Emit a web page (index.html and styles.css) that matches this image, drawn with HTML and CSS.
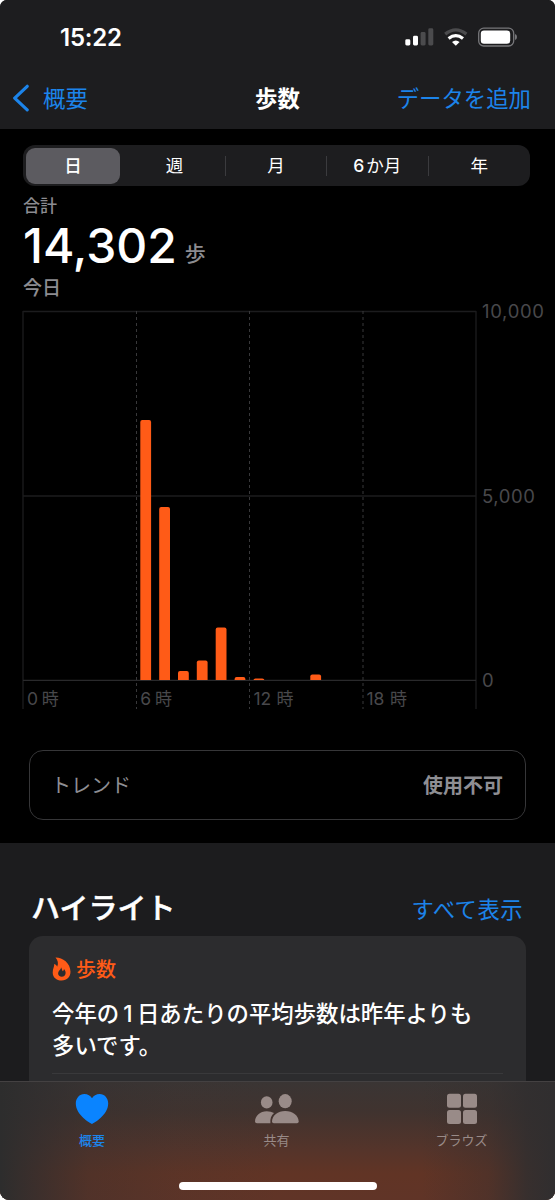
FILE: index.html
```html
<!DOCTYPE html>
<html lang="ja">
<head>
<meta charset="utf-8">
<title>歩数</title>
<link rel="stylesheet" href="styles.css">
</head>
<body>
<div class="phone">
  <header class="header">
    <div class="status">
      <span class="time">15:22</span>
      <svg class="status-icons" width="112" height="20" viewBox="0 0 112 20">
        <g fill="#fff"><rect x="0.3" y="12.3" width="5" height="6.1" rx="1.4"/><rect x="8" y="8.8" width="5" height="9.6" rx="1.4"/></g>
        <g fill="#4b4b4d"><rect x="15.6" y="5" width="5" height="13.4" rx="1.4"/><rect x="23.3" y="1.3" width="5" height="17.1" rx="1.4"/></g>
        <path d="M40.2 7.1Q50.8-1.3 61.4 7.1" fill="none" stroke="#4b4b4d" stroke-width="3.3"/>
        <path d="M43.6 11.6Q50.8 5.8 58 11.6" fill="none" stroke="#fff" stroke-width="3.2"/>
        <path d="M47 15Q50.8 11.9 54.6 15L50.8 18.8Z" fill="#fff"/>
        <rect x="73.7" y="1.2" width="35" height="17.8" rx="5" fill="none" stroke="#77777a" stroke-width="1.3"/>
        <rect x="75.8" y="3.5" width="29.4" height="13.2" rx="3.2" fill="#fff"/>
        <path d="M110 7.1Q112 7.8 112 10.1T110 13.1Z" fill="#77777a"/>
      </svg>
    </div>
    <nav class="nav">
      <a class="back"><svg width="18" height="28" viewBox="0 0 18 28"><path d="M15.2 2.3L2.7 14.1L15.2 25.8" fill="none" stroke="#1c84ea" stroke-width="3.2" stroke-linecap="round" stroke-linejoin="round"/></svg><span>概要</span></a>
      <h1 class="title">歩数</h1>
      <a class="add">データを追加</a>
    </nav>
  </header>

  <main class="content">
    <div class="segments">
      <span class="segment selected">日</span><span class="segment">週</span><span class="segment divided">月</span><span class="segment divided"><span class="six">6</span>か月</span><span class="segment divided">年</span>
    </div>
    <section class="summary">
      <div class="total-label">合計</div>
      <div class="total"><span class="number">14,302</span><span class="unit">歩</span></div>
      <div class="date">今日</div>
    </section>
    <svg class="chart" width="555" height="420" viewBox="0 300 555 420">
      <g stroke="#1c1c1e" stroke-width="1.3" fill="none">
        <path d="M23 311.5H476M23 496H476"/>
        <path d="M23 311V709M476 311V709"/>
        <path d="M23 680.3H476" stroke="#29292b"/>
        <path d="M136.5 311V709M249.5 311V709M363 311V709" stroke="#38383a" stroke-width="1" stroke-dasharray="3 3"/>
      </g>
      <g fill="#ff5b17">
        <path d="M140.3 680V422q0-2 2-2h6.8q2 0 2 2V680z"/>
        <path d="M159.2 680V509q0-2 2-2h6.8q2 0 2 2V680z"/>
        <path d="M178 680V673q0-2 2-2h6.8q2 0 2 2V680z"/>
        <path d="M196.8 680V662.6q0-2 2-2h6.8q2 0 2 2V680z"/>
        <path d="M215.7 680V629.5q0-2 2-2h6.8q2 0 2 2V680z"/>
        <path d="M234.6 680v-1q0-2 2-2h6.8q2 0 2 2v1z"/>
        <path d="M253.5 680q0-1.5 2-1.5h6.8q2 0 2 1.5z"/>
        <path d="M310.3 680v-3.5q0-2 2-2h6.8q2 0 2 2V680z"/>
      </g>
      <g class="axis-y">
        <text x="482" y="318" textLength="62">10,000</text>
        <text x="482" y="502.7" textLength="53">5,000</text>
        <text x="482" y="687">0</text>
      </g>
      <g class="axis-x">
        <text x="27" y="705">0</text><text class="hour" x="41.8" y="704.6">時</text>
        <text x="140.3" y="705">6</text><text class="hour" x="155" y="704.6">時</text>
        <text x="253.5" y="705">12</text><text class="hour" x="276.6" y="704.6">時</text>
        <text x="366.5" y="705">18</text><text class="hour" x="390" y="704.6">時</text>
      </g>
    </svg>
    <div class="trend"><span>トレンド</span><strong>使用不可</strong></div>
  </main>

  <section class="highlights">
    <div class="highlights-head"><h2>ハイライト</h2><a>すべて表示</a></div>
    <article class="card">
      <div class="card-label">
        <svg width="20" height="24" viewBox="0 0 20 24"><path fill="#ff5b17" fill-rule="evenodd" d="M3.5 .5C10.2.3 18.5 5.8 18.5 14.8C18.5 20 15 23.5 9.7 23.5C4.3 23.5.7 20.2.7 15.4C.7 11.6 2.5 9.6 2.2 7.1C4 7.7 4.8 8.6 5.1 9.8C6.7 6.9 6 3.1 3.5.5ZM9 10.3C10.2 12 9.8 13.2 10.7 14.2C11.6 13.6 11.9 12.8 12 12C14.8 15 13.9 19.8 9.8 19.8C5.9 19.8 5.2 16 7.3 13.6C8.4 12.3 9 11.7 9 10.3Z"/></svg>
        <span>歩数</span>
      </div>
      <p class="card-text">今年の<span class="digit">1</span>日あたりの平均歩数は昨年よりも<br>多いです。</p>
      <div class="separator"></div>
    </article>
  </section>

  <footer class="tabbar">
    <div class="tabs">
      <a class="tab active"><svg width="34" height="32" viewBox="0 0 34 32"><path fill="#0a84ff" d="M17 31C15.2 30.2.8 22 .8 10.5C.8 5.2 4.5 1 9.3 1C12.8 1 15.6 2.7 17 5.3C18.4 2.7 21.2 1 24.7 1C29.5 1 33.2 5.2 33.2 10.5C33.2 22 18.8 30.2 17 31Z"/></svg><span>概要</span></a>
      <a class="tab"><svg width="46" height="32" viewBox="0 0 46 32"><g fill="#998b88"><ellipse cx="12.7" cy="9.4" rx="5.8" ry="6.2"/><path d="M3 30.2Q1 30.2 1 28.4C1.2 22.6 6 18.2 12.8 18.2Q17 18.2 20 20C17.2 22.5 16 25.7 16.4 30.2Z"/><ellipse cx="31.2" cy="8.2" rx="6.5" ry="7.1"/><path d="M19.8 30.2Q18 30.2 18 28.5C18.2 22.5 23.8 18 31.2 18C38.7 18 44.4 22.5 44.7 28.5Q44.7 30.2 43 30.2Z"/></g></svg><span>共有</span></a>
      <a class="tab"><svg width="32" height="32" viewBox="0 0 32 32"><g fill="#998b88"><rect x="1" y="0.8" width="14" height="14" rx="2.5"/><rect x="17" y="0.8" width="14" height="14" rx="2.5"/><rect x="1" y="17" width="14" height="14" rx="2.5"/><rect x="17" y="17" width="14" height="14" rx="2.5"/></g></svg><span>ブラウズ</span></a>
    </div>
    <div class="home-indicator"></div>
  </footer>
</div>
</body>
</html>
```
FILE: styles.css
```css
* { box-sizing: border-box; }
html { background: #fff; }
body {
  margin: 0;
  font-family: Inter, "Noto Sans CJK JP", sans-serif;
  color: #fff;
}
h1, h2, p { margin: 0; }
a, span, strong, h1, h2 { white-space: nowrap; }
.phone {
  width: 555px;
  height: 1200px;
  display: flex;
  flex-direction: column;
  background: #000;
  border-radius: 7px 7px 9px 9px;
  overflow: hidden;
}
.header { height: 129px; background: #1d1d1f; flex: none; }
.status {
  height: 72px;
  padding: 2px 38px 0 60px;
  display: flex;
  align-items: center;
  justify-content: space-between;
}
.time { font-size: 24px; font-weight: 600; letter-spacing: -0.2px; }
.nav {
  height: 50px;
  padding: 0 12px;
  display: grid;
  grid-template-columns: 1fr auto 1fr;
  align-items: center;
  font-size: 22.4px;
  color: #1c84ea;
}
.back { display: flex; align-items: center; gap: 13px; }
.back svg { margin-top: 2px; }
.title { font-size: 22.4px; font-weight: 700; color: #fff; }
.add { justify-self: end; margin-right: 12px; }
.content { height: 714px; flex: none; padding-top: 16px; }
.segments {
  margin: 0 25px 0 23px;
  height: 41px;
  border-radius: 12px;
  background: #1d1d1f;
  display: grid;
  grid-template-columns: 101px 101px 101px 101.5px 102.5px;
  align-items: center;
}
.segment {
  text-align: center;
  font-size: 17.5px;
  font-weight: 400;
  line-height: 20px;
}
.six { margin-right: 2px; font-weight: 500; }
.segment.divided { border-left: 1.5px solid #3b3b3e; }
.segment.selected {
  font-weight: 500;
  line-height: 36px;
  margin: 0 4px 0 3px;
  background: #5c5b60;
  border-radius: 9px;
}
.summary {
  height: 114px;
  padding: 8px 0 0 23px;
  color: #8c8c91;
  font-weight: 500;
}
.total-label { font-size: 17px; line-height: 24px; }
.total { height: 58px; display: flex; align-items: baseline; gap: 8px; line-height: 56px; }
.number { font-size: 48px; color: #fff; }
.unit { font-size: 21px; transform: translateY(-2px); }
.date { font-size: 19px; line-height: 26px; }
.chart { display: block; }
.axis-y, .axis-x { fill: #48484b; font-size: 18.5px; }
.axis-x { font-size: 17.5px; }
.hour { font-size: 17px; }
.trend {
  margin: 30px 29px 0;
  height: 70px;
  padding: 0 22px 1px 21px;
  border: 1.5px solid #363638;
  border-radius: 14px;
  display: flex;
  align-items: center;
  justify-content: space-between;
  font-size: 20px;
  color: #8e8e93;
}
.highlights { height: 238px; flex: none; background: #1c1c1e; overflow: hidden; }
.highlights-head {
  height: 93px;
  padding: 34px 32px 0 31px;
  display: flex;
  justify-content: space-between;
  align-items: center;
}
.highlights-head h2 {
  font-size: 29px;
  font-weight: 500;
  -webkit-text-stroke: 0.5px #fff;
  margin-top: -2px;
}
.highlights-head a { font-size: 22.3px; letter-spacing: 0.5px; margin-top: 3px; color: #1c84ea; }
.card {
  margin: 0 29px;
  height: 160px;
  border-radius: 14px 14px 0 0;
  background: #2c2c2e;
  padding: 19px 23px;
}
.card-label {
  height: 27px;
  display: flex;
  align-items: center;
  gap: 4px;
  font-size: 20px;
  font-weight: 500;
  color: #ff5b17;
}
.card-text {
  margin-top: 16px;
  font-size: 22.4px;
  font-weight: 500;
  line-height: 31.5px;
}
.digit { margin: 0 4.5px 0 4px; }
.separator { margin-top: 12px; height: 1px; background: #39393b; }
.tabbar {
  height: 119px;
  flex: none;
  border-top: 1px solid #444142;
  background:
    linear-gradient(90deg, #2d2d2d 0%, rgba(46, 45, 46, .75) 6%, rgba(50, 46, 46, .34) 16%, rgba(60, 50, 48, .15) 32%, rgba(60, 50, 48, 0) 50%, rgba(60, 50, 48, 0) 76%, rgba(50, 46, 46, .35) 88%, rgba(48, 46, 47, .85) 95%, #302e2f 100%),
    linear-gradient(180deg, #3a3534 0%, #40332f 25%, #55342a 58%, #613425 78%, #603427 100%);
}
.tabs { height: 100px; padding-top: 11px; display: grid; grid-template-columns: 184px 185px 185px; }
.tab { display: flex; flex-direction: column; align-items: center; color: #998b88; font-size: 13px; }
.tab span { line-height: 20px; margin-top: 5px; }
.tab.active { color: #1c84ea; font-weight: 500; }
.home-indicator { width: 198px; height: 7.5px; margin-left: 179px; border-radius: 4px; background: #fff; }
```
